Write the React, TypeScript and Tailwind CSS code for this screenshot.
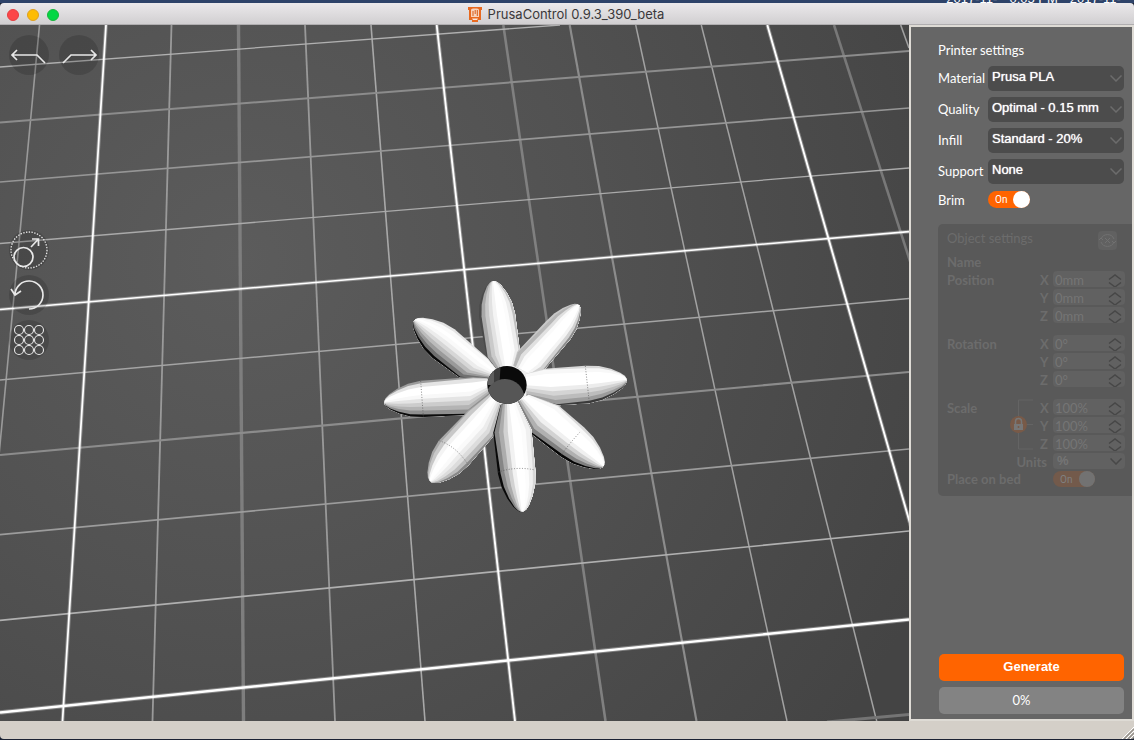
import { useState } from "react";

interface Petal {
  base: number[];
  neck: number[];
  shoulder: number[];
  tip: number[];
  shades: string[];
}

// x1, y1, x2, y2, stroke, width
const gridLines: [number, number, number, number, string, number][] = [
  [39.5, 25, -26, 721, "#9a9a9a", 1.6],
  [171.5, 25, 152.5, 721, "#9a9a9a", 1.8],
  [238.5, 25, 243.5, 721, "#7e7e7e", 3.4],
  [305, 25, 335, 721, "#999999", 1.8],
  [371, 25, 425, 721, "#a8a8a8", 1.6],
  [503.3, 25, 605.5, 721, "#808080", 2.6],
  [569.7, 25, 696.5, 721, "#8c8c8c", 2.2],
  [635.7, 25, 787, 721, "#a2a2a2", 1.5],
  [701.3, 25, 876.7, 721, "#a2a2a2", 1.5],
  [834, 25, 1058, 721, "#787878", 2.6],
  [900.7, 25, 909, 48, "#a0a0a0", 1.6],
  [0, 67, 560, 25, "#b0b0b0", 1.3],
  [0, 122.5, 909, 51, "#8c8c8c", 2],
  [0, 182, 909, 108, "#969696", 1.7],
  [0, 243.5, 909, 168, "#aaaaaa", 1.3],
  [0, 380, 909, 298.5, "#a4a4a4", 1.6],
  [0, 455, 909, 372, "#8c8c8c", 2.2],
  [0, 534.7, 909, 449, "#9c9c9c", 1.7],
  [0, 620.3, 909, 531, "#b0b0b0", 1.7],
  [827, 722, 909, 714.5, "#747474", 3],
];

const majorLines: [number, number, number, number, number][] = [
  [106, 25, 62.5, 721, 1.8],
  [436.7, 25, 515, 721, 1.9],
  [767.3, 25, 966.6, 721, 1.9],
  [0, 309.5, 909, 231.6, 1.6],
  [0, 712.5, 909, 619.5, 2.4],
];

const petals: Petal[] = [
  {
    base: [383, 302, 430, 288],
    neck: [350, 262, 449, 238],
    shoulder: [327, 140, 435, 130],
    tip: [369, 36],
    shades: ["#4a4a4a", "#a8a8a8", "#cacaca", "#e2e2e2", "#f4f4f4", "#ffffff", "#ffffff", "#fcfcfc", "#ececec", "#c0c0c0"],
  },
  {
    base: [430, 287, 488, 314],
    neck: [441, 246, 524, 298],
    shoulder: [528, 154, 602, 206],
    tip: [624, 106],
    shades: ["#c8c8c8", "#b6b6b6", "#e0e0e0", "#fafafa", "#ffffff", "#ffffff", "#ffffff", "#f4f4f4", "#d2d2d2", "#8c8c8c"],
  },
  {
    base: [382, 302, 352, 326],
    neck: [355, 266, 268, 322],
    shoulder: [254, 178, 188, 264],
    tip: [135, 153],
    shades: ["#e4e4e4", "#fafafa", "#ffffff", "#fafafa", "#ececec", "#d6d6d6", "#bcbcbc", "#9a9a9a", "#707070", "#080808"],
  },
  {
    base: [466, 312, 470, 380],
    neck: [522, 296, 562, 406],
    shoulder: [646, 287, 658, 400],
    tip: [767, 330],
    shades: ["#d8d8d8", "#f8f8f8", "#ffffff", "#ffffff", "#ffffff", "#ececec", "#d4d4d4", "#bcbcbc", "#9c9c9c", "#3a3a3a"],
  },
  {
    base: [352, 325, 358, 376],
    neck: [310, 321, 292, 435],
    shoulder: [152, 332, 160, 441],
    tip: [46, 397],
    shades: ["#9c9c9c", "#e4e4e4", "#ffffff", "#ffffff", "#f8f8f8", "#e4e4e4", "#cccccc", "#b4b4b4", "#909090", "#0c0c0c"],
  },
  {
    base: [476, 374, 442, 396],
    neck: [565, 406, 480, 488],
    shoulder: [642, 472, 573, 560],
    tip: [698, 587],
    shades: ["#dadada", "#f8f8f8", "#ffffff", "#ffffff", "#ffffff", "#f0f0f0", "#d2d2d2", "#b0b0b0", "#808080", "#060606"],
  },
  {
    base: [357, 374, 393, 406],
    neck: [294, 422, 369, 500],
    shoulder: [206, 512, 296, 585],
    tip: [183, 632],
    shades: ["#a8a8a8", "#c8c8c8", "#f4f4f4", "#ffffff", "#ffffff", "#fafafa", "#ececec", "#dcdcdc", "#bcbcbc", "#888888"],
  },
  {
    base: [392, 404, 442, 394],
    neck: [370, 488, 484, 478],
    shoulder: [384, 612, 496, 600],
    tip: [455, 722],
    shades: ["#080808", "#868686", "#acacac", "#d2d2d2", "#f2f2f2", "#ffffff", "#ffffff", "#fcfcfc", "#f0f0f0", "#d8d8d8"],
  },
];

const seams = [
  "M152 333L160 440",
  "M385 606Q440 588 495 600",
  "M208 512Q260 530 294 584",
  "M574 556Q590 530 630 486",
  "M646 288L658 398",
];

// share of the width taken by the outermost facet, ring by ring
const edgeShare = [0.01, 0.03, 0.07, 0.07, 0.07, 0.07, 0.07, 0.07];

// One lengthwise strip of a petal, narrowing along the rings towards the tip
function facetPath(p: Petal, index: number) {
  const count = p.shades.length;
  const [lx, ly, rx, ry] = p.shoulder;
  const rings = [p.base, p.neck, p.shoulder];
  [[0.35, 0.9], [0.65, 0.68], [0.88, 0.42], [0.98, 0.24], [1.02, 0.1]].forEach(([t, w]) => {
    const cx = ((lx + rx) / 2) * (1 - t) + p.tip[0] * t;
    const cy = ((ly + ry) / 2) * (1 - t) + p.tip[1] * t;
    const dx = ((rx - lx) / 2) * w;
    const dy = ((ry - ly) / 2) * w;
    rings.push([cx - dx, cy - dy, cx + dx, cy + dy]);
  });
  const share = (i: number, edge: number) => {
    if (i <= 0) return 0;
    if (i >= count) return 1;
    return edge + ((i - 1) / (count - 2)) * (1 - 2 * edge);
  };
  const at = (ring: number[], f: number) =>
    `${(ring[0] + (ring[2] - ring[0]) * f).toFixed(1)} ${(ring[1] + (ring[3] - ring[1]) * f).toFixed(1)}`;
  const start = rings.map((ring, r) => at(ring, share(index, edgeShare[r])));
  // run under all the strips that follow, so no gap shows between two of them
  const end = rings.map((ring) => at(ring, 1)).reverse();
  return `M${[...start, ...end].join("L")}Z`;
}

function Scene() {
  return (
    <svg
      className="absolute inset-0 h-full w-full"
      viewBox="0 25 909 696"
      preserveAspectRatio="xMinYMin slice"
      role="img"
      aria-label="Print bed"
    >
      <defs>
        <radialGradient id="bed" gradientUnits="userSpaceOnUse" cx="240" cy="260" r="760">
          <stop offset="0" stopColor="#5c5c5c" />
          <stop offset="0.45" stopColor="#525252" />
          <stop offset="1" stopColor="#444444" />
        </radialGradient>
        <clipPath id="hole">
          <ellipse cx="411" cy="345" rx="59" ry="57" />
        </clipPath>
      </defs>
      <rect x="0" y="25" width="909" height="696" fill="url(#bed)" />
      {gridLines.map(([x1, y1, x2, y2, stroke, width], i) => (
        <line key={i} x1={x1} y1={y1} x2={x2} y2={y2} stroke={stroke} strokeWidth={width} />
      ))}
      {majorLines.map(([x1, y1, x2, y2, width], i) => (
        <g key={i} stroke="#ffffff">
          <line x1={x1} y1={y1} x2={x2} y2={y2} strokeWidth={width + 2} strokeOpacity="0.3" />
          <line x1={x1} y1={y1} x2={x2} y2={y2} strokeWidth={width} />
        </g>
      ))}
      <g transform="translate(370 270) scale(0.33333)">
        <circle cx="411" cy="345" r="76" fill="#f0f0f0" />
        {petals.map((p, i) => (
          <g key={i}>
            {p.shades.map((shade, j) => (
              <path key={j} d={facetPath(p, j)} fill={shade} />
            ))}
          </g>
        ))}
        {seams.map((d) => (
          <path key={d} d={d} fill="none" stroke="#555555" strokeWidth="2" strokeDasharray="3 5" />
        ))}
        <g clipPath="url(#hole)">
          <rect x="350" y="285" width="122" height="120" fill="#0a0a0a" />
          <path d="M350 285H392L388 345H350Z" fill="#3c3c3c" />
          <path d="M350 285H372V345H350Z" fill="#5e5e5e" />
          <ellipse cx="405" cy="384" rx="58" ry="57" fill="#565656" />
        </g>
      </g>
    </svg>
  );
}

function ToolButton({ label, children }: { label: string; children: React.ReactNode }) {
  return (
    <button type="button" aria-label={label} className="h-10 w-10 rounded-full bg-black/15">
      <svg viewBox="0 0 40 40" className="h-10 w-10" fill="none" stroke="#e8e8e8" strokeWidth="1.7">
        {children}
      </svg>
    </button>
  );
}

function Chevron({ className }: { className: string }) {
  return (
    <svg viewBox="0 0 12 7" className={className} fill="none" stroke="currentColor" strokeWidth="1.5">
      <path d="M0.5 0.5L6 6L11.5 0.5" />
    </svg>
  );
}

function SettingSelect({ label, value }: { label: string; value: string }) {
  const id = label.toLowerCase();
  return (
    <div className="flex items-center">
      <label htmlFor={id} className="w-[50px]">
        {label}
      </label>
      <div className="relative flex-1">
        <select
          id={id}
          className="block h-[25px] w-full appearance-none rounded-[5px] bg-[#4c4c4c] pb-[4px] pl-1 font-['Liberation_Sans',Arial,sans-serif] text-[13px] text-white [text-shadow:0_0_1px_#fff]"
        >
          <option>{value}</option>
        </select>
        <Chevron className="pointer-events-none absolute right-[2px] top-[9px] h-[7px] w-3 text-[#6c6c6c]" />
      </div>
    </div>
  );
}

function AxisField({ group, axis, value }: { group: string; axis: string; value: string }) {
  return (
    <label className="flex h-4 items-center">
      <span className="w-[13px] pt-1 font-bold">{axis}</span>
      <span className="relative">
        <input
          disabled
          aria-label={`${group} ${axis}`}
          defaultValue={value}
          className="block h-4 w-[72px] rounded-[4px] bg-[#616161] pl-[2px] pt-1 text-[13px] text-[#757575]"
        />
        <svg
          viewBox="0 0 14 16"
          className="absolute right-[3px] top-0 h-4 w-[14px]"
          fill="none"
          stroke="#474747"
          strokeWidth="1.5"
        >
          <path d="M1 8.500L7 4L13 8.500M1 11.500L7 16L13 11.500" />
        </svg>
      </span>
    </label>
  );
}

function AxisGroup({ label, value, children }: { label: string; value: string; children?: React.ReactNode }) {
  return (
    <fieldset className="flex">
      <legend className="float-left flex-1 font-bold leading-[18px]">{label}</legend>
      {children}
      <div className="flex flex-col gap-[2px]">
        {["X", "Y", "Z"].map((axis) => (
          <AxisField key={axis} group={label} axis={axis} value={value} />
        ))}
      </div>
    </fieldset>
  );
}

export default function App() {
  const [brim, setBrim] = useState(true);

  return (
    <div className="flex min-h-screen flex-col bg-[#1b2233] font-['Lato',sans-serif] text-[13px]">
      <div className="flex h-[3px] items-end justify-end gap-3 overflow-hidden bg-[#2e4369] font-['Liberation_Sans',sans-serif] text-[13px] leading-[9px] text-white">
        <span>2017-11-</span>
        <span>0:05 PM</span>
        <span>2017-11-</span>
        <span className="-mr-1">*</span>
      </div>

      <header className="relative flex h-[22px] items-center justify-center gap-[6px] rounded-t-[4px] border-b border-[#b0aeb0] bg-linear-to-b from-[#ebe9eb] to-[#d1cfd1] pr-[2px] pt-[2px]">
        <div className="absolute left-[7px] flex gap-2">
          <button type="button" aria-label="Close" className="h-3 w-3 rounded-full border border-[#e33e41] bg-[#fc4648]" />
          <button type="button" aria-label="Minimize" className="h-3 w-3 rounded-full border border-[#e0a020] bg-[#fdbc04]" />
          <button type="button" aria-label="Zoom" className="h-3 w-3 rounded-full border border-[#17b53c] bg-[#04d744]" />
        </div>
        <svg viewBox="0 0 14 15" className="h-[15px] w-[14px]">
          <path d="M0 0H14V3H13V13H10V15H4V13H1V3H0Z" fill="#e8691f" />
          <path d="M3 3Q3 1.500 5 1.500H9Q11 1.500 11 3V10H3Z" fill="#f6d3bd" />
          <path d="M5 9V4M7.200 3V7M9.300 3V9" fill="none" stroke="#d95d17" />
          <path d="M4 11.500H10L9 13H5Z" fill="#fbe6da" />
        </svg>
        <h1 className="font-['Inter',sans-serif] text-[13px] text-[#3a383a]">PrusaControl 0.9.3_390_beta</h1>
      </header>

      <main className="flex flex-1">
        <section className="relative flex-1 overflow-hidden bg-[#505050]">
          <Scene />
          <div className="relative px-[9px] pt-[10px]">
            <div className="flex gap-[10px]">
              <ToolButton label="Undo">
                <path d="M8 15L3 20L8 25M3 20H28L36 28" />
              </ToolButton>
              <ToolButton label="Redo">
                <path d="M32 15L37 20L32 25M37 20H12L4 28" />
              </ToolButton>
            </div>
            <div className="mt-[155px] flex flex-col gap-[5px]">
              <ToolButton label="Scale">
                <circle cx="20" cy="20" r="18" strokeWidth="1.3" strokeDasharray="1.4 1.4" />
                <circle cx="14.500" cy="27" r="9.500" />
                <path d="M22 17L29.500 9M23 9H29.500V16" />
              </ToolButton>
              <ToolButton label="Rotate">
                <path d="M20 34A14 14 0 1 0 6 19M2 14L6 20L12 16" />
              </ToolButton>
              <ToolButton label="Arrange">
                {[10, 20, 30].map((y) =>
                  [10, 20, 30].map((x) => <circle key={`${x}-${y}`} cx={x} cy={y} r="4.500" strokeWidth="1.1" />)
                )}
              </ToolButton>
            </div>
          </div>
        </section>

        <aside className="flex w-[225px] flex-col border-2 border-[#dedbd5] bg-[#666666] pb-[5px] pl-[27px] pr-2 pt-3 text-white">
          <h2 className="mb-[5px] leading-[22px]">Printer settings</h2>
          <div className="flex flex-col gap-[6px]">
            <SettingSelect label="Material" value="Prusa PLA" />
            <SettingSelect label="Quality" value="Optimal - 0.15 mm" />
            <SettingSelect label="Infill" value="Standard - 20%" />
            <SettingSelect label="Support" value="None" />
          </div>
          <label className="mt-[7px] flex h-[17px] items-center">
            <span className="w-[50px] pt-[2px]">Brim</span>
            <input type="checkbox" className="peer sr-only" checked={brim} onChange={() => setBrim(!brim)} />
            <span className="flex h-[17px] w-[42px] items-center justify-between rounded-full bg-[#ff6400] pl-[7px] font-['Roboto',sans-serif] text-[10px]">
              {brim ? "On" : "Off"}
              <span className="h-[17px] w-[17px] rounded-full bg-white" />
            </span>
          </label>

          <div className="-mr-2 mt-4 rounded-l-[5px] bg-[#595959] pb-[9px] pl-[9px] pr-[7px] pt-[7px] text-[#6c6c6c]">
            <div className="mb-1 flex h-[19px] justify-between pr-2">
              <h2 className="leading-[14px]">Object settings</h2>
              <button type="button" disabled aria-label="Reset" className="h-[19px] w-[19px] rounded-[4px] bg-[#616161]">
                <svg viewBox="0 0 19 19" className="h-[19px] w-[19px]" fill="none" stroke="#717171">
                  <path d="M3 8A7 7 0 0 1 16 8M16 11A7 7 0 0 1 3 11M1 9L3 7L5 9M14 10L16 12L18 10M7 7L12 12M12 7L7 12" />
                </svg>
              </button>
            </div>
            <p className="mb-[2px] h-[15px] font-bold leading-4">Name</p>
            <div className="flex flex-col gap-3">
              <AxisGroup label="Position" value="0mm" />
              <AxisGroup label="Rotation" value="0°" />
              <AxisGroup label="Scale" value="100%">
                <svg viewBox="0 0 24 52" className="mr-[6px] h-[52px] w-6" fill="none">
                  <path d="M23 1H8.500V50H23M8.500 25.500H23" stroke="#646464" />
                  <circle cx="8.500" cy="25.500" r="8.500" fill="#785a48" />
                  <path d="M4 25H13V31H4Z" fill="#777777" />
                  <path d="M5.500 25V22.500A3 3 0 0 1 11.500 22.500V25" stroke="#777777" strokeWidth="1.500" />
                  <circle cx="8.500" cy="28" r="1" fill="#785a48" />
                </svg>
              </AxisGroup>
            </div>
            <div className="mt-[2px] flex h-4 items-center justify-end">
              <label htmlFor="units" className="mr-[6px] pt-1 font-bold">
                Units
              </label>
              <div className="relative">
                <select
                  id="units"
                  disabled
                  className="block h-4 w-[72px] appearance-none rounded-[4px] bg-[#616161] pl-1 font-['Liberation_Sans',sans-serif] text-[13px] font-bold leading-4 text-[#757575] opacity-100"
                >
                  <option>%</option>
                </select>
                <Chevron className="absolute right-[3px] top-[5px] h-[7px] w-3 text-[#484848]" />
              </div>
            </div>
            <label className="mt-[2px] flex h-4 items-center">
              <span className="flex-1 pt-px font-bold">Place on bed</span>
              <input type="checkbox" className="sr-only" disabled defaultChecked />
              <span className="mr-[30px] flex h-4 w-[42px] items-center justify-between rounded-full bg-[#735a4b] pl-[7px] font-['Roboto',sans-serif] text-[10px] text-[#808080]">
                On
                <span className="h-4 w-4 rounded-full bg-[#727272]" />
              </span>
            </label>
          </div>

          <div className="mt-auto flex flex-col gap-[6px] pl-px">
            <button
              type="button"
              className="h-[27px] rounded-[5px] bg-[#ff6400] pb-px font-['Liberation_Sans',Arial,sans-serif] font-bold"
            >
              Generate
            </button>
            <div
              role="progressbar"
              aria-label="Progress"
              aria-valuenow={0}
              className="flex h-[27px] items-center justify-center rounded-[5px] bg-[#838383] pr-5"
            >
              0%
            </div>
          </div>
        </aside>
      </main>

      <footer className="mb-px flex h-[18px] items-end justify-end rounded-b-[4px] bg-[#d4cfc8]">
        <svg viewBox="0 0 14 14" className="h-[14px] w-[14px]" fill="none">
          <path d="M2 14L14 2M6 14L14 6M10 14L14 10" stroke="#ffffff" />
          <path d="M4 14L14 4M8 14L14 8M12 14L14 12" stroke="#96928c" strokeWidth="1.500" />
        </svg>
      </footer>
    </div>
  );
}
